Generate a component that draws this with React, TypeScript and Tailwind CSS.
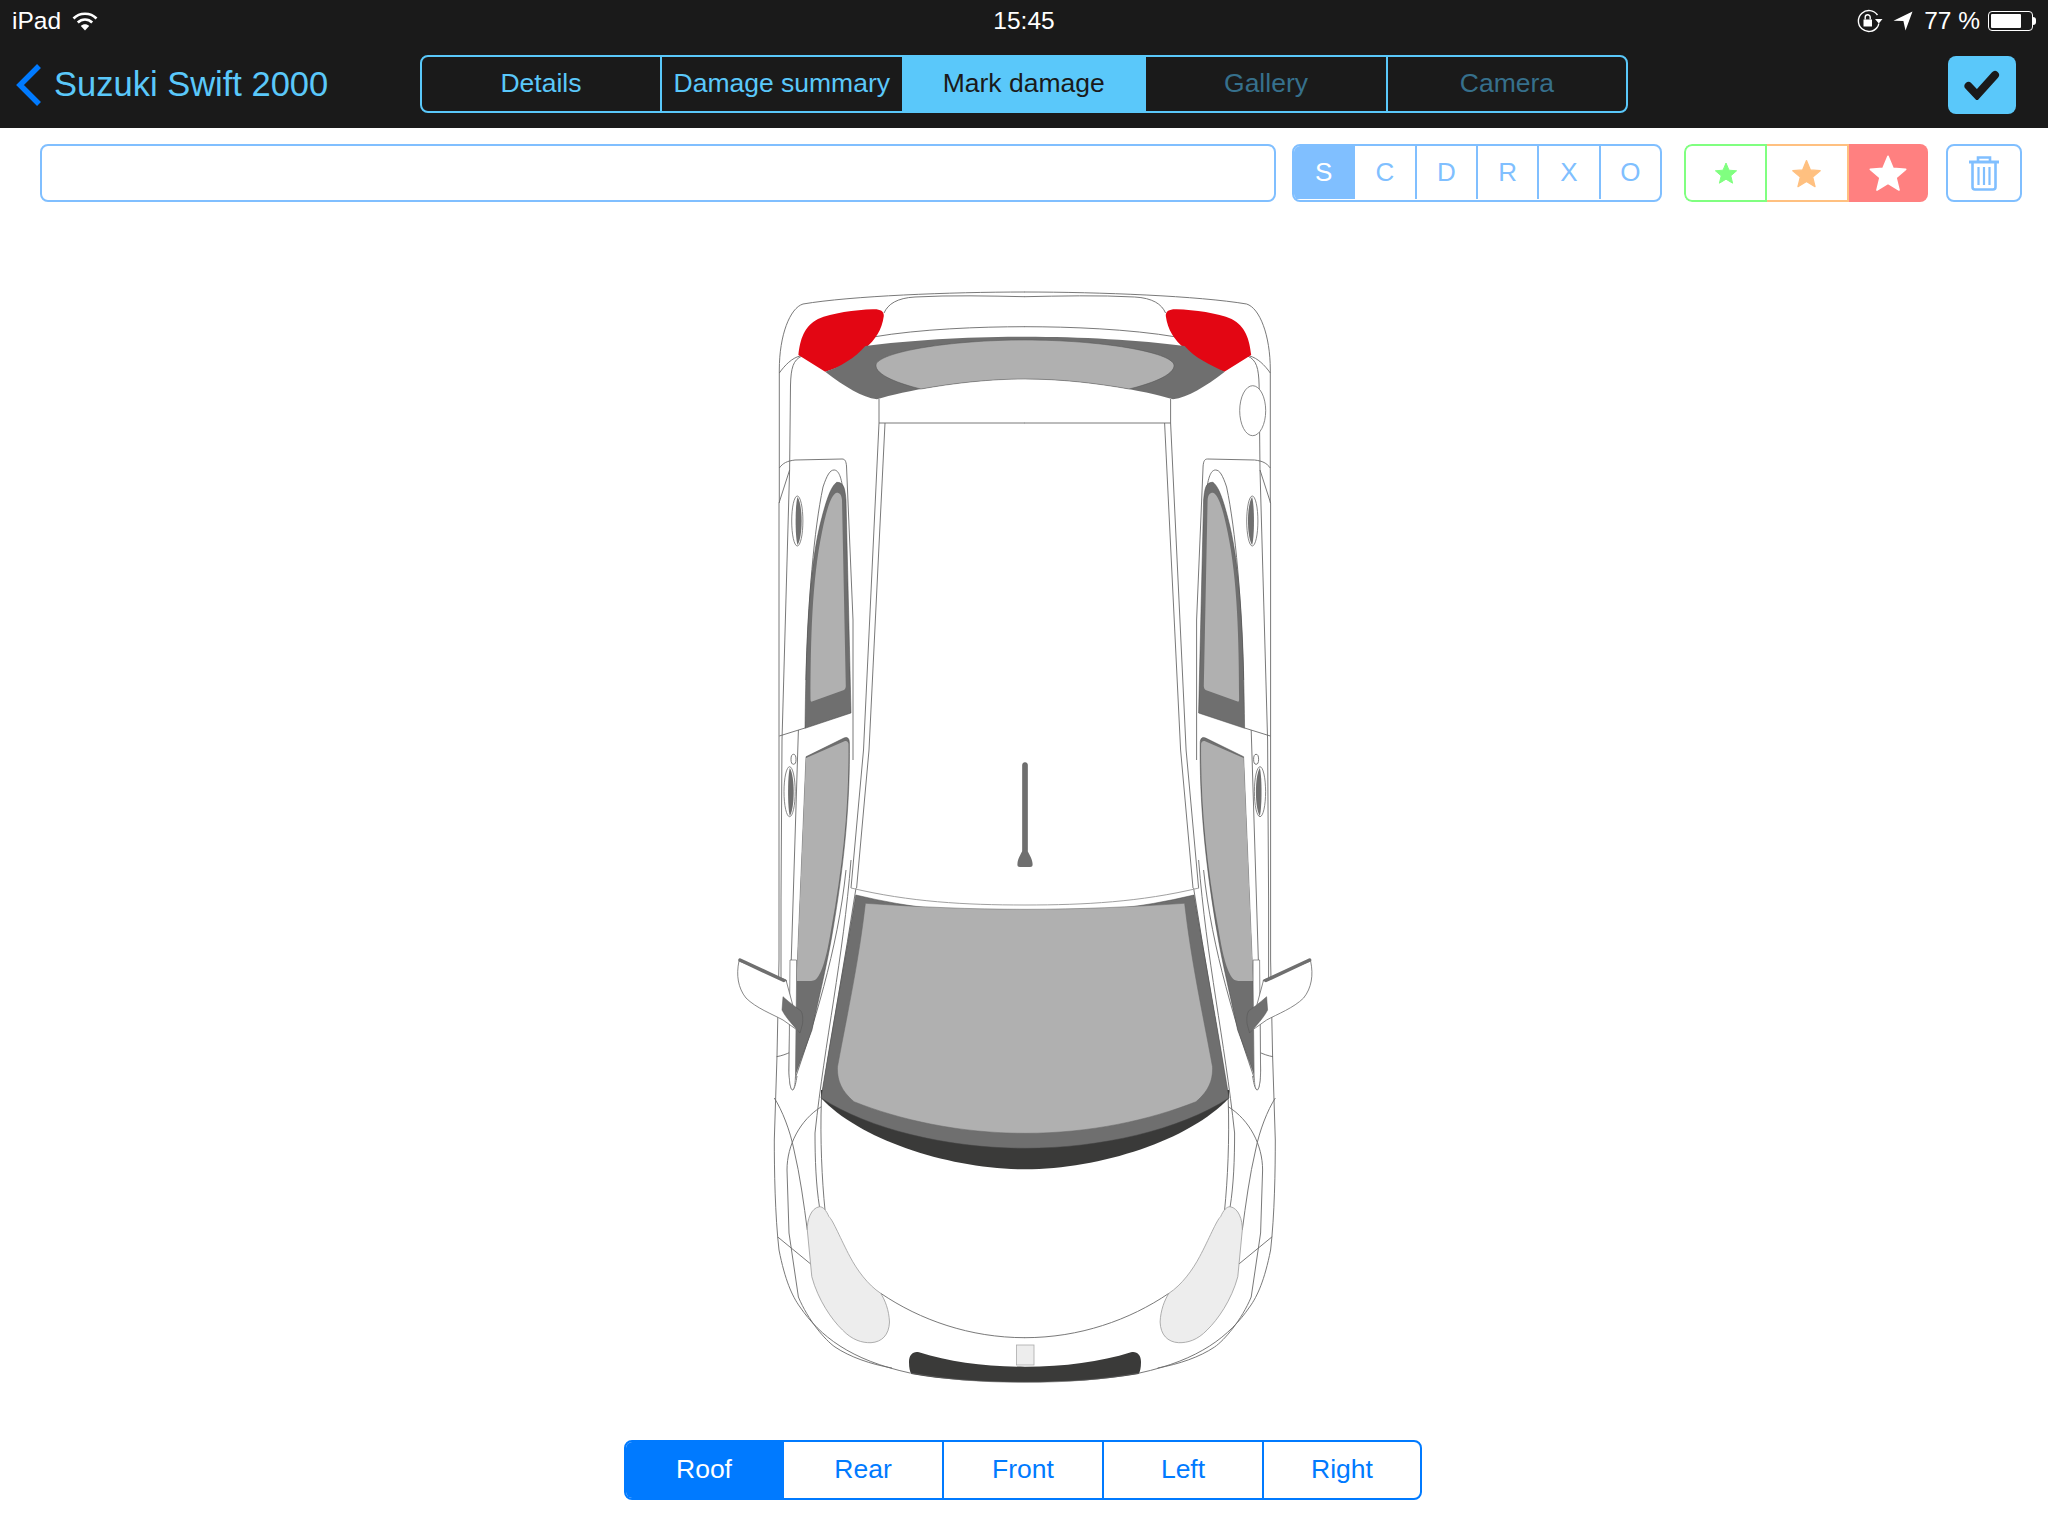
import React from 'react';

const tabs = ['Details', 'Damage summary', 'Mark damage', 'Gallery', 'Camera'];
const letters = ['S', 'C', 'D', 'R', 'X', 'O'];
const views = ['Roof', 'Rear', 'Front', 'Left', 'Right'];

function Star({ size, color }: { size: number; color: string }) {
  return (
    <svg width={size} height={size} viewBox="0 0 24 24">
      <path
        d="M12 2 L15 9.2 L22.6 9.8 L16.8 14.8 L18.6 22.2 L12 18.2 L5.4 22.2 L7.2 14.8 L1.4 9.8 L9 9.2 Z"
        fill={color}
        stroke={color}
        strokeWidth="1"
        strokeLinejoin="round"
      />
    </svg>
  );
}

function StatusBar() {
  return (
    <div className="flex h-[42px] items-center px-3 text-[24.5px] text-white">
      <div className="flex flex-1 items-center gap-[11px]">
        <span>iPad</span>
        <svg width="26" height="20" viewBox="0 0 26 20" fill="none" stroke="white" strokeWidth="2.6">
          <path d="M1.5 7.5 C7.5 1.2 18.5 1.2 24.5 7.5" />
          <path d="M5.8 11.5 C9.8 7.5 16.2 7.5 20.2 11.5" />
          <path d="M13 19.5 L8.8 15 C11 12.8 15 12.8 17.2 15 Z" fill="white" stroke="none" />
        </svg>
      </div>
      <span className="text-center font-[500]">15:45</span>
      <div className="flex flex-1 items-center justify-end">
        <svg width="26" height="24" viewBox="0 0 26 24" fill="none" stroke="white" strokeWidth="1.4" className="mr-[10px]">
          <path d="M20.5 6 A10.5 10.5 0 1 0 20.5 18" />
          <path d="M20.5 18 A10.5 10.5 0 0 0 21.8 14.5" />
          <rect x="6.5" y="10.5" width="8.5" height="7" fill="white" stroke="none" />
          <path d="M8.2 10.5 V8.2 A2.5 2.5 0 0 1 13.2 8.2 V10.5" />
          <path d="M18 10 H25.5 L21.8 14.5 Z" fill="white" stroke="none" />
        </svg>
        <svg width="20" height="20" viewBox="0 0 20 20" className="mr-[11px]">
          <path d="M19.5 0.5 L0.5 9.8 L10.4 10 L12.5 19.5 Z" fill="white" />
        </svg>
        <span className="mr-2">77 %</span>
        <div className="flex items-center">
          <div className="h-[20px] w-[45px] rounded-[4px] border border-white p-[2px]">
            <div className="h-full w-[77%] rounded-[1px] bg-white" />
          </div>
          <div className="h-[8px] w-[3px] rounded-r-sm bg-white" />
        </div>
      </div>
    </div>
  );
}

function NavBar() {
  return (
    <div className="flex h-[86px] items-start pt-[13px]">
      <div className="mt-1 flex w-[420px] items-center pl-4">
        <svg width="26" height="42" viewBox="0 0 26 42" fill="none" stroke="#007aff" strokeWidth="5.5" className="mt-[1px]">
          <path d="M23 2 L4 21 L23 40" />
        </svg>
        <span className="ml-[12px] text-[34.5px] text-[#5ac8fa]">Suzuki Swift 2000</span>
      </div>
      <div className="grid h-[58px] w-[1208px] grid-cols-[240px_241.5px_242.5px_242px_238px] overflow-hidden rounded-lg border-2 border-[#5ac8fa] text-[26.5px]">
        {tabs.map((tab, i) => (
          <div
            key={tab}
            className={
              'flex items-center justify-center whitespace-nowrap ' +
              (i < tabs.length - 1 ? 'border-r-2 border-[#5ac8fa] ' : '') +
              (i === 2
                ? 'bg-[#5ac8fa] text-[#1a1a1a]'
                : i > 2
                ? 'text-[#36708c]'
                : 'text-[#5ac8fa]')
            }
          >
            {tab}
          </div>
        ))}
      </div>
      <div className="mt-[1px] ml-auto mr-8 flex h-[58px] w-[68px] items-center justify-center rounded-lg bg-[#5ac8fa]">
        <svg width="36" height="30" viewBox="0 0 36 30" fill="none" stroke="#1a1a1a" strokeWidth="8" strokeLinecap="round" strokeLinejoin="miter">
          <path d="M4.5 16 L13 25 L31 5" />
        </svg>
      </div>
    </div>
  );
}

function ToolRow() {
  return (
    <div className="mt-4 flex h-[58px] pl-[40px]">
      <div className="h-full w-[1236px] rounded-lg border-2 border-[#80bfff]" />
      <div className="ml-[16px] flex h-full w-[370px] overflow-hidden rounded-lg border-2 border-[#80bfff] pb-px text-[26px]">
        {letters.map((l, i) => (
          <div
            key={l}
            className={
              'flex flex-1 items-center justify-center ' +
              (i < letters.length - 1 ? 'border-r-2 border-[#80bfff] ' : '') +
              (i === 0 ? 'bg-[#80bfff] text-white' : 'text-[#80bfff]')
            }
          >
            {l}
          </div>
        ))}
      </div>
      <div className="ml-[22px] flex h-full w-[244px] overflow-hidden rounded-lg">
        <div className="flex flex-1 items-center justify-center rounded-l-lg border-2 border-[#80ff80]">
          <Star size={24} color="#80ff80" />
        </div>
        <div className="flex flex-1 items-center justify-center border-y-2 border-r-2 border-[#ffc080]">
          <Star size={31} color="#ffc080" />
        </div>
        <div className="flex flex-1 items-center justify-center bg-[#ff8080]">
          <Star size={40} color="#ffffff" />
        </div>
      </div>
      <div className="ml-[18px] flex h-full w-[76px] items-center justify-center rounded-lg border-2 border-[#80bfff]">
        <svg width="32" height="36" viewBox="0 0 32 36" fill="none" stroke="#80bfff" strokeWidth="2.6">
          <path d="M1 7 H31" strokeWidth="3" />
          <path d="M10 6 V2.5 H22 V6" />
          <path d="M4.5 8 V32 Q4.5 34.5 7 34.5 H25 Q27.5 34.5 27.5 32 V8" />
          <path d="M10.5 12 V30 M16 12 V30 M21.5 12 V30" strokeWidth="2.2" />
        </svg>
      </div>
    </div>
  );
}

// left half of the car, the right half is the same group mirrored
function CarSide() {
  return (
    <g>
      {/* body lines */}
      <g fill="none" stroke="#6a6a6a" strokeWidth="0.9">
        <path d="M779.3 503 V370 C779.3 335 790 308 803 304 C850 296 950 292 1025 292" />
        <path d="M884 313 C888 304 897 298 915 297 C950 295 990 296 1025 296.7" />
        <path d="M873 337 C920 329 980 326.7 1025 326.7" />
        <path d="M779.3 373 C785 365 792 358 800 356" />
        <path d="M802 356 C793 360 791 368 790.5 385 L789.6 470 L779 503" />
        <path d="M779.3 468 C783 463 787 461 795 460 L842 459 C845 459 846 461 846.5 466 L853 620 L853 760" />
        <path d="M823 487 C827 475 830 470 834 470 C838 470 841 475 843 490" />
        <path d="M823 487 C814 530 808 600 806 680" />
        <path d="M779.3 736 L805 728" />
        <path d="M779 503 V960" />
        <path d="M789.6 470 L782 740 L781 900 L781 1000" />
        <path d="M798.4 730 L790 1000 L789 1070 C789.5 1085 791 1090 792.7 1090 C795 1088 796 1082 797 1076" />
        <path d="M879 399 V423 H1025" />
        <path d="M879 423 L863.5 750 L851 888" />
        <path d="M885 423 L869 750 L856.6 888" />
        <path d="M851 860 C843 960 825 1040 815 1133 C815 1160 816 1185 819.5 1207" />
        <path d="M846 870 C838 950 812 1030 794 1082" />
        <path d="M856 888 C845 960 832 1030 821.4 1100 C820 1140 822 1180 825 1210" />
        <path d="M779 960 L777 1056 L774.3 1140 C774.3 1170 775 1215 779 1250 C785 1280 792 1296 800 1307 C820 1336 850 1360 910 1373" />
        <path d="M776.6 1056.7 C786 1055 797 1050 806 1041.7" />
        <path d="M821.4 1106.7 C800 1120 787 1145 787 1170 L789 1233 L798.4 1297 C808 1320 825 1340 835 1347 C850 1357 870 1364 892 1368" />
        <path d="M774.3 1098 C782 1110 790 1130 794 1150 C800 1175 804 1205 807.3 1230" />
        <path d="M777.4 1236.7 L810.7 1264" />
        <path d="M880.7 1293.3 C920 1320 970 1337.7 1025 1337.7" />
        <ellipse cx="793.5" cy="759.3" rx="2.5" ry="5" />
      </g>

      {/* door handles */}
      <ellipse cx="797.3" cy="521" rx="5.6" ry="25" fill="#fff" stroke="#6a6a6a" strokeWidth="0.8" />
      <path d="M797.5 497 C803 505 803 537 797.5 545 C795 537 795 505 797.5 497 Z" fill="#6f6f6f" />
      <ellipse cx="789.6" cy="791.7" rx="5.6" ry="25" fill="#fff" stroke="#6a6a6a" strokeWidth="0.8" />
      <path d="M789.8 768 C795 776 795 808 789.8 816 C787.5 808 787.5 776 789.8 768 Z" fill="#6f6f6f" />

      {/* rear window, side windows */}
      <path d="M836.7 482.3 C844 482 845 489 846 500 L851 713 L805 728.3 C806 650 808 575 820 525 C825 505 830 487 836.7 482.3 Z" fill="#6f6f6f" stroke="#444" strokeWidth="0.5" />
      <path d="M836.7 492.7 C840 492.7 841.5 495 842 500 L845.8 686 C845.8 688 845 689 844 690 L812 701.5 C811 702 810.5 701 810.5 699 C810.7 640 812 580 822 532 C826 512 831 494 836.7 492.7 Z" fill="#b0b0b0" />
      <path d="M806 756.7 L844 738 C847 736.5 849.4 738 849.4 743 C850 800 845 860 832 935 C827 965 816 1010 812 1030 L794.6 1076.7 L796.5 982 Z" fill="#6f6f6f" stroke="#444" strokeWidth="0.5" />
      <path d="M806 758 L845 741 C847 740.5 848.5 742 848.5 744 C849 800 844 860 831 930 C827 955 822 975 815 980 C812 981.5 805 981 796.5 981 Z" fill="#b0b0b0" />

      {/* pillar white strip covering the window */}
      <path d="M789 1073 C789.5 1085 791 1090 792.7 1090 C795 1088 795 1082 795.5 1076 L796.5 985 L796.5 960 L790 960 Z" fill="#fff" stroke="#6a6a6a" strokeWidth="0.7" />

      {/* taillight */}
      <path d="M798.4 355 C800 340 804 326 818 319 C832 313 855 310 873 309.3 C880 309 884 311 883.8 316 C882 330 875 340 865.4 348.3 C855 360 840 368 825.2 371.7 Z" fill="#e30613" />

      {/* door mirror */}
      <path d="M739 961 C736 975 738 988 746 998 C756 1008 772 1014 783 1020 L800 1032 L786 980 Z" fill="#fff" stroke="#6a6a6a" strokeWidth="0.8" />
      <path d="M740 960 L785 981" fill="none" stroke="#6f6f6f" strokeWidth="3.5" strokeLinecap="round" />
      <path d="M786 981 V1000 H780 V985 Z" fill="#fff" />
      <path d="M783 996.7 C790 1003 797 1008 801 1011 C803 1014 803 1020 802.5 1024 L800 1033 C793 1025 786 1018 782 1010 Z" fill="#6f6f6f" stroke="#555" strokeWidth="0.5" />

      {/* headlight */}
      <path d="M819.5 1206.7 C811 1208 807 1220 807.3 1230 L811.8 1276.7 C818 1300 832 1320 842.5 1330 C852 1340 862 1343 871 1342.7 C882 1342 889 1335 889.5 1322 C889 1310 885 1300 880.7 1293.3 C868 1285 857 1270 850 1256.7 C841 1240 833 1220 829 1216.7 C826 1210 823 1206.7 819.5 1206.7 Z" fill="#ededed" stroke="#9a9a9a" strokeWidth="0.8" />
    </g>
  );
}

function Car() {
  return (
    <svg className="mx-auto block" width="600" height="1130" viewBox="724 270 600 1130">
      <CarSide />
      <g transform="translate(2049.6 0) scale(-1 1)">
        <CarSide />
      </g>

      {/* fuel cap, only on one side */}
      <ellipse cx="1252.7" cy="410.7" rx="13" ry="25" fill="#fff" stroke="#6a6a6a" strokeWidth="0.8" />

      {/* rear window */}
      <path d="M825.2 371.7 C845 387 862 397 877 399.3 C905 391 965 379 1025 379 C1085 379 1145 391 1173 399.3 C1188 397 1205 387 1224.8 371.7 C1210 365 1195 358 1184.6 346 C1140 340 1080 336.7 1025 336.7 C970 336.7 910 340 865.4 346 C855 358 840 367 825.2 371.7 Z" fill="#6f6f6f" />
      <path d="M876 365 C878 352 950 340 1025 340 C1100 340 1172 352 1174 365 C1175 375 1150 384 1129 389 C1095 383 1060 379 1025 379 C990 379 955 383 921 389 C900 384 875 375 876 365 Z" fill="#b0b0b0" stroke="#555" strokeWidth="0.5" />

      {/* antenna */}
      <rect x="1022.5" y="762.5" width="5" height="90" rx="2.5" fill="#6f6f6f" stroke="#555" strokeWidth="0.5" />
      <path d="M1024.8 846 C1022 852 1018 858 1017.5 863 C1017 866 1018 867 1020 867 H1030 C1032 867 1033 866 1032.5 863 C1032 858 1028 852 1024.8 846 Z" fill="#6f6f6f" />

      {/* windscreen */}
      <path d="M851 888 C910 902 965 905 1025 905 C1085 905 1140 902 1199 888" fill="none" stroke="#a0a0a0" strokeWidth="1" />
      <path d="M821 1098 C860 1140 950 1169.3 1025 1169.3 C1100 1169.3 1190 1140 1229 1098 L1229 1090 L821 1090 Z" fill="#3a3a39" />
      <path d="M855.8 895 C910 908 965 914 1025 914 C1085 914 1140 908 1194 895 C1205 960 1218 1030 1229 1098 C1180 1130 1100 1148.3 1025 1148.3 C950 1148.3 870 1130 821 1098 C832 1030 845 960 855.8 895 Z" fill="#6f6f6f" stroke="#444" strokeWidth="0.5" />
      <path d="M865.4 903.3 C920 907 970 909.3 1025 909.3 C1080 909.3 1130 907 1184.6 903.3 C1191 960 1202 1010 1212.5 1066.7 C1213 1078 1210 1090 1196 1101.7 C1150 1120 1090 1133.3 1025 1133.3 C960 1133.3 900 1120 854 1101.7 C840 1090 837 1078 837.5 1066.7 C848 1010 859 960 865.4 903.3 Z" fill="#b0b0b0" stroke="#666" strokeWidth="0.5" />

      {/* front grille and plate */}
      <path d="M919 1352.3 C950 1362 985 1366.7 1025 1366.7 C1065 1366.7 1100 1362 1131 1352.3 C1137 1351 1141 1355 1141 1362 C1141 1368 1140 1372 1138.6 1374 C1105 1380 1065 1382.3 1025 1382.3 C985 1382.3 945 1380 911.4 1374 C910 1372 909 1368 909 1362 C909 1355 913 1351 919 1352.3 Z" fill="#3a3a39" />
      <rect x="1016.6" y="1345" width="17.4" height="20" fill="#ededed" stroke="#aaa" strokeWidth="0.8" />
      <path d="M910 1373 C950 1380 985 1382.3 1025 1382.3 C1065 1382.3 1100 1380 1140 1373" fill="none" stroke="#6a6a6a" strokeWidth="0.6" />
    </svg>
  );
}

function ViewTabs() {
  return (
    <div className="mt-10 ml-[624px] grid h-[60px] w-[798px] grid-cols-[158px_160px_160px_160px_156px] overflow-hidden rounded-lg border-2 border-[#007aff] text-[26.5px]">
      {views.map((v, i) => (
        <div
          key={v}
          className={
            'flex items-center justify-center ' +
            (i < views.length - 1 ? 'border-r-2 border-[#007aff] ' : '') +
            (i === 0 ? 'bg-[#007aff] text-white' : 'text-[#007aff]')
          }
        >
          {v}
        </div>
      ))}
    </div>
  );
}

export default function App() {
  return (
    <div className="h-[1536px] w-[2048px] overflow-hidden bg-white font-['Liberation_Sans',Arial,sans-serif]">
      <div className="h-[128px] bg-[#1a1a1a]">
        <StatusBar />
        <NavBar />
      </div>
      <ToolRow />
      <div className="mt-[68px]">
        <Car />
      </div>
      <ViewTabs />
    </div>
  );
}
